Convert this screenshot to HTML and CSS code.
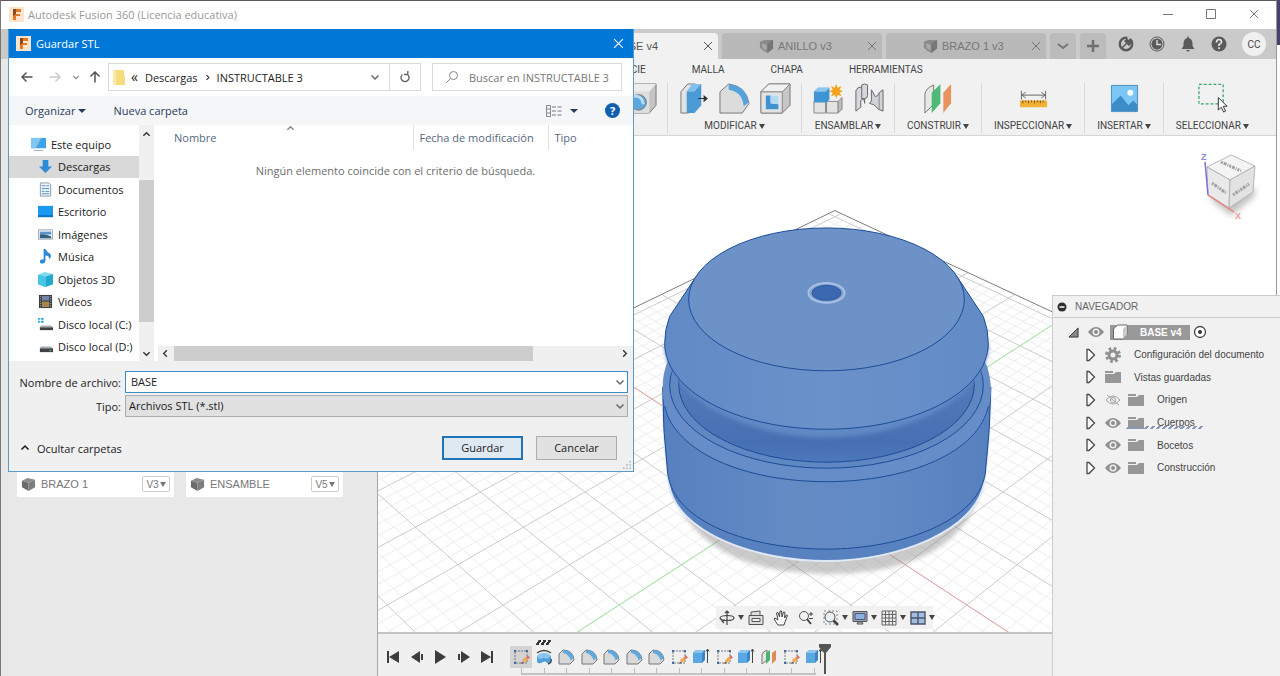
FILE: index.html
```
<!DOCTYPE html>
<html lang="es">
<head>
  <meta charset="utf-8">
  <meta name="viewport" content="width=device-width, initial-scale=1.0">
  <title>Autodesk Fusion 360</title>
  <link rel="stylesheet" href="styles.css">
</head>
<body>
  <!-- shared icons -->
  <svg class="sprite" aria-hidden="true">
    <symbol id="i-logo" viewBox="0 0 15 15"><path fill="#fbe3cd" d="M0 0h15v15H0z"/><path fill="#e87722" d="M4 2h8v3H7v2h4v2H7v4H4z"/><path fill="#8a4a1c" d="M4 2h3v5L4 9z"/></symbol>
    <symbol id="i-x" viewBox="0 0 10 10"><path d="M1 1l8 8M9 1L1 9" fill="none" stroke="currentColor"/></symbol>
    <symbol id="i-down" viewBox="0 0 10 10"><path d="M1.500 3.500L5 7l3.500-3.500" fill="none" stroke="currentColor" stroke-width="1.500"/></symbol>
    <symbol id="i-up" viewBox="0 0 10 10"><path d="M1.500 6.500L5 3l3.500 3.500" fill="none" stroke="currentColor" stroke-width="1.500"/></symbol>
    <symbol id="i-left" viewBox="0 0 10 10"><path d="M6.500 1.500L3 5l3.500 3.500" fill="none" stroke="currentColor" stroke-width="1.500"/></symbol>
    <symbol id="i-right" viewBox="0 0 10 10"><path d="M3.500 1.500L7 5 3.500 8.500" fill="none" stroke="currentColor" stroke-width="1.500"/></symbol>
    <symbol id="i-arrow" viewBox="0 0 12 12"><path d="M11.500 6H1M5.500 1.500L1 6l4.500 4.500" fill="none" stroke="currentColor" stroke-width="1.500"/></symbol>
    <symbol id="i-part" viewBox="0 0 16 16"><path fill="#8c8c8c" d="M1 4l6-3 8 2-7 3z"/><path fill="#6b6b6b" d="M1 4l7 2v9l-7-4z"/><path fill="#7d7d7d" d="M8 6l7-3v8l-7 4z"/></symbol>
    <symbol id="i-tabpart" viewBox="0 0 16 16"><path fill="#8a8a8a" d="M1 3l5-2h9v9l-6 5-5-3-3-3z"/><path fill="#a9a9a9" d="M3 4.500l5 1.500v6L4 10z"/><path fill="#777" d="M9 5l6-4v9l-6 5z"/></symbol>
    <symbol id="i-eye" viewBox="0 0 16 12"><path fill="#8f8f8f" d="M0 6q8-10 16 0-8 10-16 0z"/><circle cx="8" cy="6" r="3.500" fill="#efefef"/><circle cx="8" cy="6" r="2" fill="#8f8f8f"/></symbol>
    <symbol id="i-eyeoff" viewBox="0 0 16 12"><path fill="none" stroke="#a5a5a5" d="M1 6q7-8 14 0-7 8-14 0zM2 1l12 10"/><circle cx="8" cy="6" r="2.500" fill="none" stroke="#a5a5a5"/></symbol>
    <symbol id="i-folder" viewBox="0 0 16 12"><path fill="#979797" d="M0 12V3h9l2-2h5v11z"/><path fill="#979797" d="M0 0h8v2H0z"/></symbol>
    <symbol id="i-twisty" viewBox="0 0 12 14"><path d="M2 1.500v11h2L9.500 7 4 1.500z" fill="#fbfbfb" stroke="#4a4a4a" stroke-width="1.300"/></symbol>
    <symbol id="i-sketch" viewBox="0 0 18 18"><path d="M3 3h12v12H3z" fill="none" stroke="#777" stroke-dasharray="2 1"/><path fill="#3c6ea5" d="M2 2h2v2H2zM14 2h2v2h-2zM2 14h2v2H2z"/><path d="M11 13.500l4-3.500" stroke="#f0a94e" stroke-width="3"/><path d="M9 16l3-1-2-1.500z" fill="#555"/><path d="M15 10l2-1.500" stroke="#d9736a" stroke-width="3"/></symbol>
    <symbol id="i-fillet" viewBox="0 0 18 18"><path d="M2 6l4-4q10 0 11 10l-4 4H2z" fill="#d9d9d9" stroke="#777"/><path d="M6 2q9 0 10.500 8l-3 2.500Q12 6 6 5z" fill="#5fa9dd"/></symbol>
    <symbol id="i-extrude" viewBox="0 0 18 18"><path d="M1 5l3-3h9v10l-3 3H1z" fill="#3987c9"/><path d="M1 5l3-3h9l-3 3z" fill="#8cc6ee"/><path d="M1 5h9v10H1z" fill="#5aa8e2"/><path d="M15.500 2v13M14 3.500L15.500 1 17 3.500" stroke="#444" fill="none"/></symbol>
    <symbol id="i-planes" viewBox="0 0 18 18"><path d="M2 7q0-3 5-5v10l-5 4z" fill="#e5e5e5" stroke="#777"/><path d="M6 5l4-3v10l-4 4z" fill="#4bb26f"/><path d="M12 5l4-3v10l-4 4z" fill="#e08b57"/></symbol>
  </svg>

  <div class="window">
    <header class="titlebar">
      <svg class="icon-15"><use href="#i-logo"/></svg>
      <span class="title">Autodesk Fusion 360 (Licencia educativa)</span>
      <div class="window-buttons">
        <button aria-label="Minimizar"><svg viewBox="0 0 10 10"><path d="M0 5.500h10" stroke="currentColor"/></svg></button>
        <button aria-label="Maximizar"><svg viewBox="0 0 10 10"><path d="M.5.500h9v9h-9z" fill="none" stroke="currentColor"/></svg></button>
        <button aria-label="Cerrar"><svg><use href="#i-x"/></svg></button>
      </div>
    </header>

    <nav class="tabbar">
      <div class="tab active"><svg class="icon-15"><use href="#i-tabpart"/></svg><span>BASE v4</span><button aria-label="Cerrar BASE"><svg><use href="#i-x"/></svg></button></div>
      <div class="tab"><svg class="icon-15"><use href="#i-tabpart"/></svg><span>ANILLO v3</span><button aria-label="Cerrar ANILLO"><svg><use href="#i-x"/></svg></button></div>
      <div class="tab"><svg class="icon-15"><use href="#i-tabpart"/></svg><span>BRAZO 1 v3</span><button aria-label="Cerrar BRAZO 1"><svg><use href="#i-x"/></svg></button></div>
      <button class="tab-button" aria-label="Lista de pestañas"><svg viewBox="0 0 14 14"><path d="M2 5l5 4 5-4" fill="none" stroke="#777" stroke-width="2"/></svg></button>
      <button class="tab-button" aria-label="Nueva pestaña"><svg viewBox="0 0 14 14"><path d="M7 1v12M1 7h12" stroke="#6f6f6f" stroke-width="2.500"/></svg></button>
      <div class="status">
        <button aria-label="Extensiones"><svg viewBox="0 0 16 16"><circle cx="8" cy="8" r="6.200" fill="none" stroke="#5a5a5a" stroke-width="2.400"/><path d="M4 12l5-5M7 5l4 4 3-4-3-3z" stroke="#5a5a5a" stroke-width="1.500" fill="#5a5a5a"/><path d="M9 0l4 2-3 2z" fill="#cacaca"/></svg></button>
        <button aria-label="Estado de trabajos"><svg viewBox="0 0 16 16"><circle cx="8" cy="8" r="7" fill="none" stroke="#5a5a5a"/><circle cx="8" cy="8" r="5.500" fill="#5a5a5a"/><path d="M8 4v4.500h4" fill="none" stroke="#ddd" stroke-width="1.400"/></svg></button>
        <button aria-label="Notificaciones"><svg viewBox="0 0 16 16"><path fill="#5a5a5a" d="M8 0l1 2q3 1 3.500 5v3l2 3h-13l2-3V7Q4 3 7 2zM6 14h4q-2 3-4 0z"/></svg></button>
        <button aria-label="Ayuda"><svg viewBox="0 0 16 16"><circle cx="8" cy="8" r="7.500" fill="#5a5a5a"/><path d="M5.500 6.500q0-3 2.500-3t2.500 2.500Q10.500 7.500 8 8.500v1.500M8 11.200v1.800" fill="none" stroke="#e8e8e8" stroke-width="1.700"/></svg></button>
        <button class="avatar">CC</button>
      </div>
    </nav>

    <div class="workspace">
      <aside class="data-panel">
        <div class="card">
          <svg class="thumb" viewBox="0 0 156 112"><path fill="#5d5f66" d="M68 108h20v4H68z"/></svg>
          <div class="card-foot"><svg class="icon-15"><use href="#i-part"/></svg><span>BRAZO 1</span><button>V3<i class="caret"></i></button></div>
        </div>
        <div class="card">
          <svg class="thumb" viewBox="0 0 156 112"><path fill="#5d5f66" d="M56 108h44v4H56z"/></svg>
          <div class="card-foot"><svg class="icon-15"><use href="#i-part"/></svg><span>ENSAMBLE</span><button>V5<i class="caret"></i></button></div>
        </div>
      </aside>

      <main class="design">
        <div class="ribbon">
          <div class="ribbon-tabs">
            <a href="#">SUPERFICIE</a><a href="#">MALLA</a><a href="#">CHAPA</a><a href="#">HERRAMIENTAS</a>
          </div>
          <div class="ribbon-groups">
            <div class="group">
              <div class="tools">
                <button aria-label="Agujero"><svg viewBox="0 0 32 32"><path d="M1 9l8-8h22v22l-7 8H1z" fill="#c4c4c4" stroke="#777"/><path d="M1 9h23v22H1z" fill="#dedede"/><path d="M1 9l8-8h22l-7 8z" fill="#ececec"/><circle cx="13" cy="20" r="8" fill="#5ca7de" stroke="#777"/><path d="M8 14q8-2 10 8" fill="none" stroke="#b8dcf5" stroke-width="3"/></svg></button>
              </div>
            </div>
            <div class="group">
              <div class="tools">
                <button aria-label="Pulsar/tirar"><svg viewBox="0 0 32 32"><path d="M3 9l7-8h8v22l-7 8H3z" fill="#e2e2e2" stroke="#777"/><path d="M9 9l6-8h9v22l-7 8H9z" fill="#4a9ad6"/><path d="M9 9l6-8h9l-7 8z" fill="#7fc0ec"/><path d="M21 16h8M27 13.500L30 16l-3 2.500z" fill="#333" stroke="#333" stroke-width="1.200"/></svg></button>
                <button aria-label="Empalme"><svg viewBox="0 0 32 32"><path d="M1 9l9-8q18 2 21 20l-7 10H1z" fill="#dcdcdc" stroke="#777"/><path d="M10 1.500Q27 2 30.500 20l-5 4Q24 9 10 7z" fill="#53a4de"/></svg></button>
                <button aria-label="Vaciado"><svg viewBox="0 0 32 32"><path d="M1 9l8-8h22v22l-8 8H1z" fill="#c6c6c6" stroke="#777"/><path d="M1 9h22v22H1z" fill="#e2e2e2" stroke="#888"/><path d="M1 9l8-8h22l-8 8z" fill="#f2f2f2" stroke="#888"/><path d="M6 13h13v14H6z" fill="#f7fafc"/><path d="M6 13h5v8l8 1v5H6z" fill="#3f92d0"/><path d="M11 13h8v9l-8-1z" fill="#b4daf3"/></svg></button>
              </div>
              <button class="group-label">MODIFICAR<i class="caret"></i></button>
            </div>
            <div class="group">
              <div class="tools">
                <button aria-label="Nuevo componente"><svg viewBox="0 0 32 32"><path d="M2 19h12v12H2zM15 19h12v12H15z" fill="#e3e3e3" stroke="#888"/><path d="M27 19l4-4v12l-4 4z" fill="#bdbdbd" stroke="#888"/><path d="M2 9l4-4h12v12l-3 3H2z" fill="#3f94d4"/><path d="M2 9l4-4h12l-4 4z" fill="#8dc7ee"/><path d="M25 1l1.500 4 4-2-2 4 3.500 1.500-3.500 1.500 2 4-4-2-1.500 4-1.500-4-4 2 2-4-4-1.500 4-1.500-2-4 4 2z" fill="#f5a31c"/></svg></button>
                <button aria-label="Unión"><svg viewBox="0 0 32 32"><path d="M3 8q1-4 6-4V2q3-2 6 0v11q0 3-3 3v5q0-6-4-3v7l-5 4z" fill="#d5d8dc" stroke="#666"/><path d="M9 4v12h3" fill="none" stroke="#666"/><path d="M19 7l4 7q3 0 4-4l4-3v22l-5-2q-4-6-9-6 3-2 2-6z" fill="#cfd3d8" stroke="#666"/><path d="M27 10v17" stroke="#888"/></svg></button>
              </div>
              <button class="group-label">ENSAMBLAR<i class="caret"></i></button>
            </div>
            <div class="group">
              <div class="tools">
                <button aria-label="Plano de desfase"><svg viewBox="0 0 32 32"><path d="M3 12q0-6 9-10v20l-9 9z" fill="#e7e7e7" stroke="#777"/><path d="M10 10l9-9v20l-9 10z" fill="#4dba78"/><path d="M22 10l8-9v20l-8 10z" fill="#e8935f"/></svg></button>
              </div>
              <button class="group-label">CONSTRUIR<i class="caret"></i></button>
            </div>
            <div class="group">
              <div class="tools">
                <button aria-label="Medir"><svg viewBox="0 0 32 32"><path d="M3.500 8v9M28.500 8v9M4 12.500h24M8 9.500l-4 3 4 3M24 9.500l4 3-4 3" fill="none" stroke="#666"/><path d="M2 18h28v7H2z" fill="#f3b233"/><path d="M5 18v3M8 18v2M11 18v3M14 18v2M17 18v3M20 18v2M23 18v3M26 18v2" stroke="#6b4d10"/></svg></button>
              </div>
              <button class="group-label">INSPECCIONAR<i class="caret"></i></button>
            </div>
            <div class="group">
              <div class="tools">
                <button aria-label="Insertar imagen"><svg viewBox="0 0 32 32"><path d="M2.500 2.500h27v27h-27z" fill="#7cc6f5" stroke="#4c8fc0"/><circle cx="22" cy="10" r="3" fill="#fff"/><path d="M3 22l9-9 8 10 5-5 4 4v7H3z" fill="#3c8cc8"/></svg></button>
              </div>
              <button class="group-label">INSERTAR<i class="caret"></i></button>
            </div>
            <div class="group">
              <div class="tools">
                <button aria-label="Seleccionar"><svg viewBox="0 0 32 32"><path d="M2 1.500h25v20H2z" fill="none" stroke="#35a566" stroke-width="1.300" stroke-dasharray="3 2"/><path d="M22 15v13l3-3 2.500 5 2-1-2.500-5h4z" fill="#fff" stroke="#333"/></svg></button>
              </div>
              <button class="group-label">SELECCIONAR<i class="caret"></i></button>
            </div>
          </div>
        </div>

        <section class="viewport">
          <svg class="scene" viewBox="378 136 899 497" preserveAspectRatio="xMaxYMax slice">
            <defs>
              <linearGradient id="side" x1="0" x2="1"><stop offset="0" stop-color="#5680bf"/><stop offset=".4" stop-color="#648bc4"/><stop offset=".7" stop-color="#6189c4"/><stop offset="1" stop-color="#5680bf"/></linearGradient>
              <linearGradient id="cone" x1="0" x2="1"><stop offset="0" stop-color="#618ac6"/><stop offset=".5" stop-color="#6b91c9"/><stop offset="1" stop-color="#628bc6"/></linearGradient>
              <linearGradient id="groove" x1="0" x2="0" y1="0" y2="1"><stop offset=".55" stop-color="#5079b8"/><stop offset=".88" stop-color="#4670b2"/><stop offset="1" stop-color="#4d78b9"/></linearGradient>
              <filter id="soft"><feGaussianBlur stdDeviation="2"/></filter>
            </defs>
            <path id="gridMinor" class="grid-minor"/>
            <path id="gridMajor" class="grid-major"/>
            <path id="gridEdge" class="grid-edge"/>
            <path id="axisGreen" class="axis-green"/>
            <path id="axisRed" class="axis-red"/>
            <path d="M670 478Q690 575 834 575Q967 572 985 478z" fill="#8b8b8b" opacity=".45" filter="url(#soft)"/>
            <path d="M663 388Q663 440 669 484C676 534 757 562 827 562S978 532 985 482Q991 440 991.500 388z" fill="#5781bf" stroke="#dfe8f4" stroke-width="2"/>
            <path d="M663 388Q663 430 668 474C674 524 752 550 827 550S979 522 986 474Q991 430 991.500 388z" fill="url(#side)" class="edge"/>
            <path d="M663 388v6q1 8 3 16C675 452 743 482 827 482S980 452 989 410q2-8 2.500-16v-6q-1-16-6-26H668q-5 12-5 26z" fill="#668dc7"/>
            <path d="M665 407C675 452 743 482.500 827 482.500S980 452 989 407" class="edge" fill="none"/>
            <ellipse cx="827" cy="386" rx="157" ry="83" class="edge" fill="#5f88c3"/>
            <ellipse cx="827" cy="385" rx="148" ry="78" class="edge" fill="url(#groove)"/>
            <path d="M665 345C666 396 741 438 827 438S988 396 989 345z" fill="#6189c5" filter="url(#soft)"/>
            <path d="M696.500 277L670 317Q665 330 665 344C665 392 738 430 827 430S989 392 989 344Q989 330 984 317L957.500 277z" fill="url(#cone)" class="edge"/>
            <ellipse cx="827" cy="300" rx="138" ry="71.500" fill="#6d92c8" class="edge"/>
            <ellipse cx="827" cy="293.500" rx="18" ry="10" fill="#7fa0d2" stroke="#a9bfe3" stroke-width="2"/>
            <ellipse cx="827" cy="293.500" rx="14.500" ry="7.500" fill="#3c68af" stroke="#2a58a3"/>
          </svg>

          <svg class="viewcube" viewBox="0 0 64 76" aria-label="Cubo de vista">
            <defs><filter id="blur"><feGaussianBlur stdDeviation="3"/></filter></defs>
            <path d="M12 48l22 18 24-20v-8z" fill="#999" opacity=".6" filter="url(#blur)"/>
            <path d="M10 17L34 5l24 11-25 14z" fill="#f4f4f4" stroke="#aaa" stroke-width=".8"/>
            <path d="M10 17l23 13-1 28-21-13z" fill="#e9e9e9" stroke="#aaa" stroke-width=".8"/>
            <path d="M33 30l25-14-2 26-24 16z" fill="#e2e2e2" stroke="#aaa" stroke-width=".8"/>
            <path d="M24 12l20 9M15 33l14 10M36 45l16-11" stroke="#a2a2a2" stroke-width="3" stroke-dasharray="2 1 3 1 1 1"/>
            <path d="M8 12l3 33" stroke="#7474d6" stroke-width="1.500"/>
            <path d="M11 45l26 17" stroke="#e08c8c" stroke-width="1.500"/>
            <text x="4" y="10" fill="#8a8ae0">Z</text>
            <text x="38" y="69" fill="#ef9a9a">X</text>
          </svg>

          <div class="navbar">
            <button aria-label="Órbita"><svg viewBox="0 0 16 16"><path d="M8 1v14M6 10l-3 1 2 2M6 3l2-2 2 2" fill="none" stroke="#444" stroke-width="1.200"/><ellipse cx="8" cy="8" rx="7" ry="2.500" fill="none" stroke="#444" stroke-width="1.200"/></svg><i class="caret"></i></button>
            <button aria-label="Mirar a"><svg viewBox="0 0 16 16"><path d="M1 5.500h14v9H1zM3 5V2l9-1v4" fill="#ddd" stroke="#555"/><path d="M4 8.500h8v3H4z" fill="#eee" stroke="#555"/></svg></button>
            <button aria-label="Encuadre"><svg viewBox="0 0 16 16"><path d="M5 15L1 9l1-1 3 2-1.500-7L5 2.500 6.500 7 7 1h1.500L9 7l1.500-5 1.500.500L11.500 8 13.500 5l1 .5L12 12l-1 3z" fill="#fff" stroke="#444"/></svg></button>
            <button aria-label="Zoom"><svg viewBox="0 0 16 16"><circle cx="6" cy="6" r="4.500" fill="#eef3f8" stroke="#555"/><path d="M9 9l4 5" stroke="#444" stroke-width="2"/><path d="M11 4h4M13 2v4M11 8.500h4" stroke="#444"/></svg></button>
            <button aria-label="Ajustar"><svg viewBox="0 0 16 16"><path d="M1 1h13v13H1z" fill="none" stroke="#888" stroke-dasharray="2 2"/><circle cx="7" cy="7" r="5" fill="#e9f1f6" stroke="#555"/><path d="M10.500 10.500L15 15" stroke="#444" stroke-width="2.500"/></svg><i class="caret"></i></button>
            <button aria-label="Configuración de visualización"><svg viewBox="0 0 16 16"><path d="M1 1.500h14v10H1z" fill="#9aa9c4" stroke="#555"/><path d="M3 3.500h10v6H3z" fill="#8bb0e2" stroke="#556"/><path d="M5 14h6l-1-2H6z" fill="#ccc" stroke="#555"/></svg><i class="caret"></i></button>
            <button aria-label="Rejilla"><svg viewBox="0 0 16 16"><path d="M1 1h14v14H1zM1 4.500h14M1 8h14M1 11.500h14M4.500 1v14M8 1v14M11.500 1v14" fill="#eee" stroke="#666"/></svg><i class="caret"></i></button>
            <button aria-label="Ventanas gráficas"><svg viewBox="0 0 16 16"><path d="M1 2h14v12H1zM8 2v12M1 8h14" fill="#a3bce2" stroke="#4a5468" stroke-width="1.400"/></svg><i class="caret"></i></button>
          </div>
        </section>

        <footer class="timeline">
          <div class="playback">
            <button aria-label="Inicio"><svg viewBox="0 0 14 14"><path fill="#3d3d3d" d="M1 1h2v12H1zM13 1v12L3 7z"/></svg></button>
            <button aria-label="Anterior"><svg viewBox="0 0 14 14"><path fill="#3d3d3d" d="M10 1v12L1 7zM11 4h2v6h-2z"/></svg></button>
            <button aria-label="Reproducir"><svg viewBox="0 0 14 14"><path fill="#3d3d3d" d="M2 0v14l11-7z"/></svg></button>
            <button aria-label="Siguiente"><svg viewBox="0 0 14 14"><path fill="#3d3d3d" d="M4 1v12l9-6zM1 4h2v6H1z"/></svg></button>
            <button aria-label="Final"><svg viewBox="0 0 14 14"><path fill="#3d3d3d" d="M11 1h2v12h-2zM1 1v12l10-6z"/></svg></button>
          </div>
          <div class="features">
            <button class="selected" aria-label="Boceto 1"><svg><use href="#i-sketch"/></svg></button>
            <button class="marked" aria-label="Revolución"><svg viewBox="0 0 18 18"><path d="M2 8q7-6 14 0v6q-2 2-4 1-1-3-6 0-3 1-4-1z" fill="#4f9fdb"/><path d="M2 8q7-6 14 0-3 2-4 3-3-2-6 0-3 0-4-3z" fill="#8ac5ee"/><path d="M2 5q7-5 14 0M16 11q1 4-3 5" fill="none" stroke="#444" stroke-width="1.300"/></svg></button>
            <button aria-label="Empalme 1"><svg><use href="#i-fillet"/></svg></button>
            <button aria-label="Empalme 2"><svg><use href="#i-fillet"/></svg></button>
            <button aria-label="Empalme 3"><svg><use href="#i-fillet"/></svg></button>
            <button aria-label="Empalme 4"><svg><use href="#i-fillet"/></svg></button>
            <button aria-label="Empalme 5"><svg><use href="#i-fillet"/></svg></button>
            <button aria-label="Boceto 2"><svg><use href="#i-sketch"/></svg></button>
            <button aria-label="Extrusión 1"><svg><use href="#i-extrude"/></svg></button>
            <button aria-label="Boceto 3"><svg><use href="#i-sketch"/></svg></button>
            <button aria-label="Extrusión 2"><svg><use href="#i-extrude"/></svg></button>
            <button aria-label="Plano 1"><svg><use href="#i-planes"/></svg></button>
            <button aria-label="Boceto 4"><svg><use href="#i-sketch"/></svg></button>
            <button aria-label="Extrusión 3"><svg><use href="#i-extrude"/></svg></button>
            <svg class="marker" viewBox="0 0 12 30"><path fill="#555" d="M0 0h12v3L7 9v21H5V9L0 3z"/></svg>
          </div>
        </footer>
      </main>
    </div>
  </div>

  <aside class="browser">
    <h2><svg viewBox="0 0 10 10"><circle cx="5" cy="5" r="4.500" fill="#2e2e2e"/><path d="M2.500 5h5" stroke="#fff" stroke-width="1.500"/></svg>NAVEGADOR</h2>
    <ul>
      <li class="root">
        <svg class="tri" viewBox="0 0 12 12"><path d="M11 1v10H1z" fill="#888" stroke="#333"/></svg>
        <svg class="ico"><use href="#i-eye"/></svg>
        <span class="component"><svg viewBox="0 0 16 16"><path d="M1.500 5l4-4H15v10l-4 4H1.500z" fill="#fff" stroke="#666"/><path d="M11 5l4-4v10l-4 4z" fill="#c9c9c9"/></svg><b>BASE v4</b></span>
        <svg class="target" viewBox="0 0 14 14"><circle cx="7" cy="7" r="5.500" fill="#fff" stroke="#444" stroke-width="1.300"/><circle cx="7" cy="7" r="2" fill="#333"/></svg>
      </li>
      <li><svg class="twisty"><use href="#i-twisty"/></svg><svg class="ico gear" viewBox="0 0 16 16"><circle cx="8" cy="8" r="4" fill="none" stroke="#8f8f8f" stroke-width="3"/><circle cx="8" cy="8" r="6.500" fill="none" stroke="#8f8f8f" stroke-width="3" stroke-dasharray="2.600 2.500"/></svg><span>Configuración del documento</span></li>
      <li><svg class="twisty"><use href="#i-twisty"/></svg><svg class="ico"><use href="#i-folder"/></svg><span>Vistas guardadas</span></li>
      <li><svg class="twisty"><use href="#i-twisty"/></svg><svg class="ico"><use href="#i-eyeoff"/></svg><svg class="ico"><use href="#i-folder"/></svg><span>Origen</span></li>
      <li class="bodies"><svg class="twisty"><use href="#i-twisty"/></svg><svg class="ico"><use href="#i-eye"/></svg><svg class="ico"><use href="#i-folder"/></svg><span>Cuerpos</span></li>
      <li><svg class="twisty"><use href="#i-twisty"/></svg><svg class="ico"><use href="#i-eye"/></svg><svg class="ico"><use href="#i-folder"/></svg><span>Bocetos</span></li>
      <li><svg class="twisty"><use href="#i-twisty"/></svg><svg class="ico"><use href="#i-eye"/></svg><svg class="ico"><use href="#i-folder"/></svg><span>Construcción</span></li>
    </ul>
  </aside>

  <form class="dialog" role="dialog" aria-label="Guardar STL">
    <div class="dialog-title">
      <svg class="icon-15"><use href="#i-logo"/></svg>
      <span>Guardar STL</span>
      <button type="button" aria-label="Cerrar"><svg><use href="#i-x"/></svg></button>
    </div>

    <div class="address-row">
      <button type="button" aria-label="Atrás"><svg class="arrow"><use href="#i-arrow"/></svg></button>
      <button type="button" aria-label="Adelante" disabled><svg class="arrow flip"><use href="#i-arrow"/></svg></button>
      <button type="button" class="small" aria-label="Recientes"><svg><use href="#i-down"/></svg></button>
      <button type="button" aria-label="Subir"><svg class="arrow rise"><use href="#i-arrow"/></svg></button>
      <div class="address">
        <svg class="folder" viewBox="0 0 12 15"><path fill="#f7dc7d" d="M0 0h11v5l1 1v9H0z"/><path fill="#fbe9a6" d="M0 0h3v15H0z"/></svg>
        <span class="sep">«</span>
        <a href="#">Descargas</a>
        <svg class="sep-icon"><use href="#i-right"/></svg>
        <a href="#">INSTRUCTABLE 3</a>
        <button type="button" aria-label="Ubicaciones anteriores"><svg><use href="#i-down"/></svg></button>
        <button type="button" class="refresh" aria-label="Actualizar"><svg viewBox="0 0 12 12"><path d="M3.500 3.500A4 4 0 1 0 8.500 3.500M5 3.500h3.800V0" fill="none" stroke="#666" stroke-width="1.400"/></svg></button>
      </div>
      <label class="search">
        <svg viewBox="0 0 14 14"><circle cx="8.500" cy="5.500" r="4" fill="none" stroke="#888"/><path d="M5.500 8.500L1 13" stroke="#888"/></svg>
        <input type="search" placeholder="Buscar en INSTRUCTABLE 3" aria-label="Buscar en INSTRUCTABLE 3">
      </label>
    </div>

    <div class="commands">
      <button type="button">Organizar<i class="caret"></i></button>
      <button type="button">Nueva carpeta</button>
      <button type="button" class="view" aria-label="Cambiar la vista"><svg viewBox="0 0 16 12"><path d="M.5.500h4v11h-4zM.5 4h4M.5 8h4" fill="none" stroke="#888"/><path d="M6 2h4M6 6h4M6 10h4M11.500 2h4M11.500 6h4M11.500 10h4" stroke="#777"/></svg><i class="caret"></i></button>
      <button type="button" class="help" aria-label="Ayuda">?</button>
    </div>

    <div class="files">
      <ul class="tree">
        <li class="top"><svg viewBox="0 0 16 16"><path fill="#3fa3e8" d="M0 1h16v11H0z"/><path fill="#7fc6f5" d="M0 1h11l-6 11H0z"/><path fill="#9ab" d="M3 14h10v1H3z"/></svg>Este equipo</li>
        <li class="current"><svg viewBox="0 0 16 16"><path fill="#2f8bd8" d="M5 1h6v7h4l-7 7-7-7h4z"/></svg>Descargas</li>
        <li><svg viewBox="0 0 16 16"><path d="M2.500 1h9l2 2v12h-11z" fill="#eef5fa" stroke="#8a9aa8"/><path d="M4 4h4M4 7h8M4 10h3M8 10h4M4 12.500h8M9 4h3" stroke="#4a90c0"/></svg>Documentos</li>
        <li><svg viewBox="0 0 16 16"><path fill="#1b98f0" d="M0 2h16v12H0z"/><path fill="#0b6fc0" d="M0 12h16v2H0z"/></svg>Escritorio</li>
        <li><svg viewBox="0 0 16 16"><path d="M.5 3h15v10H.5z" fill="#e9f3fa" stroke="#a0a8ae"/><path fill="#5b93c4" d="M2 5h12v3H2z"/><path fill="#33607f" d="M2 8q5-1 12 2v2H2z"/></svg>Imágenes</li>
        <li><svg viewBox="0 0 16 16"><path fill="#2a8bd8" d="M6 0h2q1 3 5 5 2 3-1 6 0-4-4-4v5q0 3-3 3.500Q2 16 2 13.500q0-2.500 4-2.500z"/></svg>Música</li>
        <li><svg viewBox="0 0 16 16"><path fill="#7fdcf0" d="M0 3l7-3 9 2v11l-9 3-7-3z"/><path fill="#20a8cf" d="M8 5l8-3v11l-8 3z"/><path fill="#48c4e4" d="M0 3l8 2v11l-8-3z"/></svg>Objetos 3D</li>
        <li><svg viewBox="0 0 16 16"><path fill="#34383f" d="M1 1h14v14H1z"/><path fill="#7685a6" d="M4 2h8v5H4z"/><path fill="#a3884f" d="M4 8h8v6H4z"/><path d="M2.500 2v13M13.500 2v13" stroke="#ccc" stroke-dasharray="1 1.500"/></svg>Videos</li>
        <li><svg viewBox="0 0 16 16"><path fill="#a7abad" d="M3 9h11l2 2H2z"/><path fill="#3e4245" d="M2 11h14v3H2z"/><path fill="#29a9e0" d="M0 1h2v2H0zM3 1h3v2H3zM0 4h2v2H0zM3 4h3v2H3z"/></svg>Disco local (C:)</li>
        <li><svg viewBox="0 0 16 16"><path fill="#a7abad" d="M3 8h11l2 2H2z"/><path fill="#3e4245" d="M2 10h14v4H2z"/><path fill="#7dc27d" d="M12 12h2v1h-2z"/></svg>Disco local (D:)</li>
      </ul>
      <div class="vscroll"><svg><use href="#i-up"/></svg><div class="thumb-v"></div><svg><use href="#i-down"/></svg></div>
      <div class="listing">
        <svg class="sort"><use href="#i-up"/></svg>
        <table>
          <thead><tr><th class="name">Nombre</th><th class="date">Fecha de modificación</th><th>Tipo</th></tr></thead>
          <tbody><tr><td colspan="3">Ningún elemento coincide con el criterio de búsqueda.</td></tr></tbody>
        </table>
        <div class="hscroll"><svg><use href="#i-left"/></svg><div class="thumb-h"></div><svg><use href="#i-right"/></svg></div>
      </div>
    </div>

    <div class="fields">
      <label for="fileName">Nombre de archivo:</label>
      <div class="combo"><input id="fileName" type="text" value="BASE"><svg><use href="#i-down"/></svg></div>
      <label for="fileType">Tipo:</label>
      <div class="combo"><select id="fileType"><option>Archivos STL (*.stl)</option></select><svg><use href="#i-down"/></svg></div>
    </div>

    <div class="actions">
      <button type="button" class="toggle"><svg><use href="#i-up"/></svg>Ocultar carpetas</button>
      <button type="button" class="btn primary">Guardar</button>
      <button type="button" class="btn">Cancelar</button>
      <svg class="grip" viewBox="0 0 10 10"><path fill="#b5b5b5" d="M8 0h2v2H8zM8 4h2v2H8zM4 4h2v2H4zM8 8h2v2H8zM4 8h2v2H4zM0 8h2v2H0z"/></svg>
    </div>
  </form>

  <script src="grid.js"></script>
</body>
</html>
```
FILE: styles.css
```
* {
  box-sizing: border-box;
}

body {
  margin: 0;
  height: 100vh;
  overflow: hidden;
  position: relative;
  padding-right: 3px;
  background: linear-gradient(#45436b 45px, #fdfdfd 45px);
  font-family: "Liberation Sans", Arial, sans-serif;
  font-size: 11px;
  color: #444;
}

button {
  display: flex;
  align-items: center;
  justify-content: center;
  margin: 0;
  padding: 0;
  border: none;
  background: none;
  font: inherit;
  color: inherit;
}

a {
  color: inherit;
  text-decoration: none;
}

ul {
  margin: 0;
  padding: 0;
  list-style: none;
}

svg {
  display: block;
  flex: none;
}

.sprite {
  position: absolute;
  width: 0;
  height: 0;
}

.icon-15 {
  width: 15px;
  height: 15px;
}

.caret {
  display: inline-block;
  border: 3px solid transparent;
  border-top: 5px solid currentColor;
  border-bottom: none;
  margin-left: 2px;
}

/* main window */
.window {
  display: flex;
  flex-direction: column;
  height: 100%;
  border-top: 1px solid #5c585c;
  border-left: 1px solid #777;
  border-right: 1px solid #999;
  background-color: #fff;
}

.titlebar {
  display: flex;
  align-items: center;
  height: 28px;
  padding: 0 17px 2px 8px;
  gap: 4px;
  font-family: "Open Sans", "Noto Sans", sans-serif;
  color: #999;
}

.window-buttons {
  display: flex;
  gap: 33px;
  margin-left: auto;
  color: #777;
}

.window-buttons svg {
  width: 10px;
  height: 10px;
}

.tabbar {
  display: flex;
  justify-content: flex-end;
  align-items: flex-end;
  gap: 4px;
  height: 30px;
  padding-right: 10px;
  background-color: #cacaca;
}

.tab {
  display: flex;
  align-items: center;
  width: 160px;
  height: 26px;
  padding: 0 5px 0 37px;
  gap: 4px;
  border-radius: 4px 4px 0 0;
  background-color: #b9b9b9;
  color: #777;
}

.tab.active {
  background-color: #f1f1f1;
  color: #555;
}

.tab button {
  margin-left: auto;
}

.tab button svg {
  width: 10px;
  height: 10px;
}

.tab-button {
  width: 26px;
  height: 26px;
  border-radius: 4px 4px 0 0;
  background-color: #bcbcbc;
}

.tab-button svg {
  width: 14px;
  height: 14px;
}

.status {
  display: flex;
  align-items: center;
  gap: 15px;
  height: 30px;
  margin-left: 8px;
}

.status svg {
  width: 16px;
  height: 16px;
}

.avatar {
  width: 24px;
  height: 24px;
  border-radius: 50%;
  background-color: #f0f0f0;
  font-family: Roboto, sans-serif;
  font-size: 10px;
}

.workspace {
  display: flex;
  flex: 1;
  min-height: 0;
}

/* data panel */
.data-panel {
  display: flex;
  gap: 12px;
  align-items: flex-start;
  width: 377px;
  padding: 300px 34px 0 16px;
  border-right: 1px solid #a8a8a8;
  background-color: #e8e8e8;
}

.card {
  flex: 1;
  background-color: #fff;
}

.thumb {
  width: 100%;
}

.card-foot {
  display: flex;
  align-items: center;
  height: 25px;
  padding: 0 4px;
  gap: 5px;
  color: #777;
}

.card-foot button {
  height: 16px;
  width: 28px;
  margin-left: auto;
  border: 1px solid #ccc;
  border-radius: 2px;
  font-size: 10px;
}

.card-foot .caret {
  margin-left: 1px;
}

/* design area */
.design {
  display: flex;
  flex-direction: column;
  flex: 1;
  min-width: 0;
}

.ribbon {
  display: flex;
  flex-direction: column;
  height: 77px;
  padding-right: 15px;
  border-bottom: 1px solid #d5d5d5;
  background-color: #f1f1f1;
  font-family: Roboto, sans-serif;
  font-size: 10px;
}

.ribbon-tabs {
  display: flex;
  gap: 46px;
  padding: 4px 0 0 214px;
  line-height: 14px;
}

.ribbon-groups {
  display: flex;
  justify-content: flex-end;
  margin-top: 6px;
}

.group {
  display: flex;
  flex-direction: column;
  align-items: center;
  gap: 4px;
  height: 50px;
  padding: 0 10px;
  border-right: 1px solid #dadada;
}

.group:last-child {
  border-right: none;
}

.tools {
  display: flex;
  gap: 10px;
}

.tools svg {
  width: 31px;
  height: 31px;
}

.group-label {
  padding: 0 2px;
  line-height: 16px;
}

.viewport {
  position: relative;
  flex: 1;
  min-height: 0;
  background-color: #fff;
}

.scene {
  position: absolute;
  width: 100%;
  height: 100%;
}

.grid-minor,
.grid-major,
.grid-edge,
.axis-green,
.axis-red {
  fill: none;
  stroke: #ededed;
}

.grid-major {
  stroke: #cbcbcb;
}

.grid-edge {
  stroke: #7c7c7c;
}

.axis-green {
  stroke: #a5eba5;
}

.axis-red {
  stroke: #eba5a5;
}

.edge {
  stroke: #1b4c99;
  stroke-width: 1;
}

.viewcube {
  position: absolute;
  top: 14px;
  right: 15px;
  width: 64px;
  height: 76px;
  font-size: 9px;
  font-weight: bold;
}

.navbar {
  position: absolute;
  bottom: 3px;
  left: 338px;
  display: flex;
  align-items: center;
  gap: 9px;
  height: 23px;
  padding: 0 3px;
  background-color: #f1f1f1;
}

.navbar svg {
  width: 16px;
  height: 16px;
}

.navbar .caret {
  margin-left: 3px;
  margin-right: -5px;
}

.timeline {
  display: flex;
  align-items: flex-start;
  height: 44px;
  padding: 12px 0 0 8px;
  border-top: 2px solid #c4c4c4;
  background-color: #f0f0f0;
}

.playback {
  display: flex;
  align-items: center;
  justify-content: space-between;
  width: 108px;
  height: 22px;
}

.playback svg {
  width: 14px;
  height: 14px;
}

.features {
  display: flex;
  margin-left: 16px;
  position: relative;
}

.features button {
  position: relative;
  width: 22px;
  height: 22px;
  margin-right: 1px;
}

.features button:nth-child(even) {
  margin-right: 0;
}

.features button svg {
  width: 18px;
  height: 18px;
}

.features .selected {
  background-color: #d3d3d3;
}

/* ruler under the features */
.features button::after {
  content: "";
  position: absolute;
  left: 11px;
  top: 22px;
  width: 23px;
  height: 5px;
  border-left: 1px solid #bbb;
  border-bottom: 2px solid #c4c4c4;
}

.features button:last-of-type::after {
  width: 1px;
}

.features .marked::before {
  content: "";
  position: absolute;
  left: 4px;
  top: -6px;
  width: 13px;
  height: 5px;
  background: repeating-linear-gradient(90deg, #333 0 3px, transparent 3px 5px);
  transform: skewX(-35deg);
}

.marker {
  position: absolute;
  right: -6px;
  top: -2px;
  width: 12px;
  height: 30px;
}

/* browser tree */
.browser {
  position: absolute;
  top: 295px;
  right: 0;
  bottom: 0;
  width: 228px;
  border: 1px solid #ccc;
  border-right: none;
  border-bottom: none;
  background-color: #f1f1f1;
  font-size: 10px;
}

.browser h2 {
  display: flex;
  align-items: center;
  gap: 8px;
  height: 22px;
  margin: 0;
  padding-left: 4px;
  border-bottom: 1px solid #ccc;
  font-size: 10px;
  font-weight: normal;
  color: #666;
}

.browser h2 svg {
  width: 10px;
  height: 10px;
}

.browser ul {
  display: grid;
  grid-auto-rows: 1fr;
  height: 158px;
  margin-top: 3px;
}

.browser li {
  display: flex;
  align-items: center;
  padding-left: 32px;
}

.browser .root {
  padding-left: 15px;
}

.tri {
  width: 11px;
  height: 11px;
  margin-right: 9px;
}

.twisty {
  width: 12px;
  height: 14px;
  margin-right: 8px;
}

.ico {
  width: 16px;
  height: 12px;
  margin-right: 7px;
}

.root .ico {
  margin-right: 6px;
}

.ico.gear {
  height: 16px;
}

.browser li > span {
  margin-left: 6px;
}

.root .component {
  display: flex;
  align-items: center;
  gap: 12px;
  height: 15px;
  padding: 0 8px 0 2px;
  background-color: #999;
  color: #fff;
}

.browser .root .component {
  margin-left: 0;
}

.component svg {
  width: 16px;
  height: 16px;
}

.target {
  width: 14px;
  height: 14px;
  margin-left: 3px;
}

.bodies {
  position: relative;
}

.bodies::after {
  content: "";
  position: absolute;
  left: 74px;
  top: 15px;
  width: 76px;
  height: 3px;
  background: repeating-linear-gradient(90deg, #8699b8 0 3px, transparent 3px 6px);
  transform: skewX(-35deg);
}

/* save dialog */
.dialog {
  position: absolute;
  top: 29px;
  left: 8px;
  width: 626px;
  border: 1px solid #5b9bc8;
  border-top-color: #0078d7;
  background-color: #f0f0f0;
  font-family: "Open Sans", "Noto Sans", sans-serif;
  font-size: 11px;
  color: #1a1a1a;
}

.dialog-title {
  display: flex;
  align-items: center;
  gap: 5px;
  height: 28px;
  padding: 0 9px 2px 7px;
  background-color: #0078d7;
  color: #fff;
}

.dialog-title button {
  margin-left: auto;
}

.dialog-title button svg {
  width: 11px;
  height: 11px;
}

.address-row {
  display: flex;
  align-items: center;
  height: 38px;
  padding: 0 11px;
  background-color: #fff;
  color: #222;
}

.address-row > button {
  width: 28px;
  color: #555;
}

.address-row > button:disabled {
  color: #ccc;
}

.address-row > .small {
  width: 14px;
  color: #888;
}

.address-row > .small svg {
  width: 8px;
  height: 8px;
}

.address-row > .small + button {
  width: 24px;
}

.address-row > button:first-child {
  width: 14px;
  margin-right: 7px;
}

.arrow {
  width: 12px;
  height: 12px;
}

.arrow.flip {
  transform: rotate(180deg);
}

.arrow.rise {
  transform: rotate(90deg);
}

.address {
  display: flex;
  align-items: center;
  flex: 1;
  height: 28px;
  margin-left: 1px;
  padding-left: 4px;
  border: 1px solid #d9d9d9;
}

.folder {
  width: 12px;
  height: 15px;
}

.sep {
  margin: 0 7px 0 6px;
  font-size: 14px;
  line-height: 14px;
}

.sep-icon {
  width: 7px;
  height: 7px;
  margin: 0 6px;
}

.address button {
  margin-left: auto;
  width: 28px;
  color: #666;
}

.address button svg {
  width: 10px;
  height: 10px;
}

.address .refresh {
  width: 31px;
  height: 26px;
  margin-left: 0;
  border-left: 1px solid #d9d9d9;
}

.address .refresh svg {
  width: 12px;
  height: 12px;
}

.search {
  display: flex;
  align-items: center;
  gap: 10px;
  width: 190px;
  height: 28px;
  margin-left: 11px;
  padding: 0 0 0 12px;
  border: 1px solid #d9d9d9;
}

.search svg {
  width: 14px;
  height: 14px;
}

.search input {
  flex: 1;
  min-width: 0;
  padding: 0;
  border: none;
  outline: none;
  font: inherit;
  appearance: none;
}

.search input::placeholder {
  color: #777;
}

.commands {
  display: flex;
  align-items: center;
  gap: 27px;
  height: 29px;
  padding: 0 13px 0 16px;
  background-color: #f5f6f7;
  color: #2b3c5e;
}

.commands .caret {
  border-width: 4px 4px 0;
  margin-left: 3px;
}

.view {
  margin-left: auto;
}

.view svg {
  width: 16px;
  height: 12px;
}

.commands .view .caret {
  margin-left: 8px;
}

.help {
  width: 15px;
  height: 15px;
  border-radius: 50%;
  background-color: #0f5fae;
  color: #fff;
  font-weight: bold;
}

.files {
  display: flex;
  height: 236px;
  background-color: #fff;
}

.tree {
  display: grid;
  grid-auto-rows: 1fr;
  width: 130px;
  padding: 8px 0 3px;
}

.tree li {
  display: flex;
  align-items: center;
  gap: 5px;
  padding-left: 29px;
  white-space: nowrap;
}

.tree li svg {
  width: 15px;
  height: 15px;
}

.tree .top {
  padding-left: 22px;
}

.tree .current {
  background-color: #d9d9d9;
}

.vscroll {
  display: flex;
  flex-direction: column;
  align-items: center;
  justify-content: space-between;
  width: 15px;
  padding: 5px 0 3px;
  background-color: #f0f0f0;
}

.vscroll svg,
.hscroll svg {
  width: 9px;
  height: 9px;
  color: #333;
}

.thumb-v {
  width: 100%;
  height: 142px;
  margin-top: 14px;
  background-color: #cdcdcd;
}

.listing {
  position: relative;
  display: flex;
  flex-direction: column;
  flex: 1;
  margin-left: 4px;
}

.sort {
  position: absolute;
  left: 128px;
  top: -1px;
  width: 9px;
  height: 9px;
  color: #888;
}

.listing table {
  width: 100%;
  border-collapse: collapse;
}

.listing th {
  height: 25px;
  padding: 0 0 0 6px;
  text-align: left;
  font-weight: normal;
  color: #56677f;
}

.listing .name {
  width: 255px;
  padding-left: 16px;
  border-right: 1px solid #e2e2e2;
}

.listing .date {
  width: 135px;
  border-right: 1px solid #e2e2e2;
}

.listing td {
  height: 40px;
  padding: 0;
  text-align: center;
  color: #6d6d6d;
}

.hscroll {
  display: flex;
  align-items: center;
  height: 15px;
  margin-top: auto;
  padding: 0 4px 0 3px;
  gap: 4px;
  background-color: #f0f0f0;
}

.hscroll svg:last-child {
  margin-left: auto;
}

.thumb-h {
  width: 359px;
  height: 15px;
  background-color: #cdcdcd;
}

.fields {
  display: grid;
  grid-template-columns: 112px 1fr;
  align-items: center;
  gap: 2px 4px;
  padding: 10px 5px 0 0;
}

.fields label {
  text-align: right;
  white-space: nowrap;
}

.combo {
  position: relative;
}

.combo input,
.combo select {
  display: block;
  width: 100%;
  height: 22px;
  padding: 0 5px 2px;
  border: 1px solid #3f8cc4;
  border-radius: 0;
  outline: none;
  background-color: #fff;
  font: inherit;
  color: inherit;
}

.combo select {
  padding: 0 3px 2px;
  appearance: none;
  border-color: #adadad;
  background-color: #e1e1e1;
}

.combo svg {
  position: absolute;
  right: 3px;
  top: 6px;
  width: 10px;
  height: 10px;
  color: #666;
}

.actions {
  position: relative;
  display: flex;
  align-items: center;
  gap: 13px;
  padding: 19px 16px 11px 11px;
}

.toggle {
  gap: 7px;
  margin-right: auto;
}

.toggle svg {
  width: 10px;
  height: 10px;
}

.btn {
  width: 81px;
  height: 24px;
  padding-bottom: 2px;
  border: 1px solid #adadad;
  background-color: #e1e1e1;
}

.btn.primary {
  border: 2px solid #1f74b8;
  background-color: #dfe9f2;
}

.grip {
  position: absolute;
  right: 2px;
  bottom: 2px;
  width: 8px;
  height: 8px;
}
```
FILE: grid.js
```
// ground grid in perspective: (a, b) are cell indexes along the two axes
function project(a, b) {
  const s = a + b;
  const d = (a - b) / 2;
  const w = 1 - 0.03371 * s;
  const x = (523.7 + 108.2 * d - 27.1 * s) / w;
  const y = (528 + 18.57 * s) / w;
  return x.toFixed(1) + ' ' + y.toFixed(1);
}

function line(a1, b1, a2, b2) {
  return 'M' + project(a1, b1) + 'L' + project(a2, b2);
}

function draw(id, d) {
  document.getElementById(id).setAttribute('d', d);
}

const minA = -3.17;
const minB = -9.17;
const maxA = 12;
const maxB = 6;

let minor = '';
let major = '';
for (let i = -15; i <= maxA * 5; i++) {
  const d = line(i / 5, minB, i / 5, maxB);
  if (i % 5 === 0) major += d; else minor += d;
}
for (let i = -45; i <= maxB * 5; i++) {
  const d = line(minA, i / 5, maxA, i / 5);
  if (i % 5 === 0) major += d; else minor += d;
}

draw('gridMinor', minor);
draw('gridMajor', major);
draw('gridEdge', line(minA, minB, minA, maxB) + line(minA, minB, maxA, minB));
draw('axisGreen', line(2, minB, 2, maxB));
draw('axisRed', line(minA, -3, maxA, -3));
```
